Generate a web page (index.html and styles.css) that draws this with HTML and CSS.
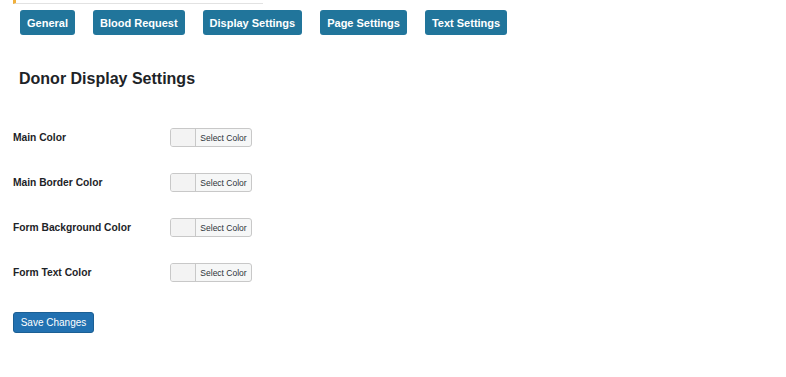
FILE: index.html
```html
<!DOCTYPE html>
<html lang="en">
<head>
    <meta charset="UTF-8">
    <meta name="viewport" content="width=device-width, initial-scale=1.0">
    <title>Donor Display Settings</title>
    <link rel="stylesheet" href="styles.css">
</head>
<body>
    <div class="wrap">
        <div class="notice"></div>

        <nav class="tabs">
            <a class="tab" href="#">General</a>
            <a class="tab" href="#">Blood Request</a>
            <a class="tab" href="#">Display Settings</a>
            <a class="tab" href="#">Page Settings</a>
            <a class="tab" href="#">Text Settings</a>
        </nav>

        <h2>Donor Display Settings</h2>

        <form class="settings-form">
            <div class="form-row">
                <label>Main Color</label>
                <button type="button" class="color-picker"><span class="swatch"></span><span class="picker-text">Select Color</span></button>
            </div>
            <div class="form-row">
                <label>Main Border Color</label>
                <button type="button" class="color-picker"><span class="swatch"></span><span class="picker-text">Select Color</span></button>
            </div>
            <div class="form-row">
                <label>Form Background Color</label>
                <button type="button" class="color-picker"><span class="swatch"></span><span class="picker-text">Select Color</span></button>
            </div>
            <div class="form-row">
                <label>Form Text Color</label>
                <button type="button" class="color-picker"><span class="swatch"></span><span class="picker-text">Select Color</span></button>
            </div>

            <button type="submit" class="save-btn">Save Changes</button>
        </form>
    </div>
</body>
</html>
```

FILE: styles.css
```css
* {
    margin: 0;
    padding: 0;
    box-sizing: border-box;
}

body {
    background: #ffffff;
    color: #1d2327;
    font-family: 'Liberation Sans', Arial, sans-serif;
}

.wrap {
    padding: 0 0 0 13px;
}

.notice {
    width: 250px;
    height: 4px;
    border-left: 3px solid #f0b03c;
    border-bottom: 1px solid #e2e2e2;
}

.tabs {
    display: flex;
    gap: 18px;
    margin: 6px 0 0 7px;
}

.tab {
    display: inline-flex;
    align-items: center;
    height: 25px;
    padding: 0 7px;
    background: #21759b;
    color: #ffffff;
    font-size: 11px;
    font-weight: bold;
    text-decoration: none;
    border-radius: 3px;
}

h2 {
    font-size: 16px;
    font-weight: bold;
    color: #1d2327;
    margin: 34px 0 0 6px;
    line-height: 20px;
}

.settings-form {
    margin-top: 39px;
    display: flex;
    flex-direction: column;
    align-items: flex-start;
}

.form-row {
    display: flex;
    align-items: center;
    height: 19px;
    margin-bottom: 26px;
}

.form-row label {
    width: 157px;
    font-size: 10.25px;
    font-weight: bold;
    color: #1d2327;
}

.color-picker {
    display: flex;
    align-items: stretch;
    height: 19px;
    width: 82px;
    border: 1px solid #c8c8c8;
    border-radius: 3px;
    background: #f6f7f7;
    overflow: hidden;
    cursor: pointer;
    font-family: inherit;
}

.swatch {
    width: 25px;
    background: #f3f3f3;
    border-right: 1px solid #c8c8c8;
}

.picker-text {
    flex: 1;
    display: flex;
    align-items: center;
    justify-content: center;
    font-size: 8.5px;
    color: #2c3338;
}

.save-btn {
    margin-top: 4px;
    height: 21px;
    width: 81px;
    background: #2271b1;
    color: #ffffff;
    border: 1px solid #1b5f94;
    border-radius: 3px;
    font-family: inherit;
    font-size: 10px;
    cursor: pointer;
}
```
